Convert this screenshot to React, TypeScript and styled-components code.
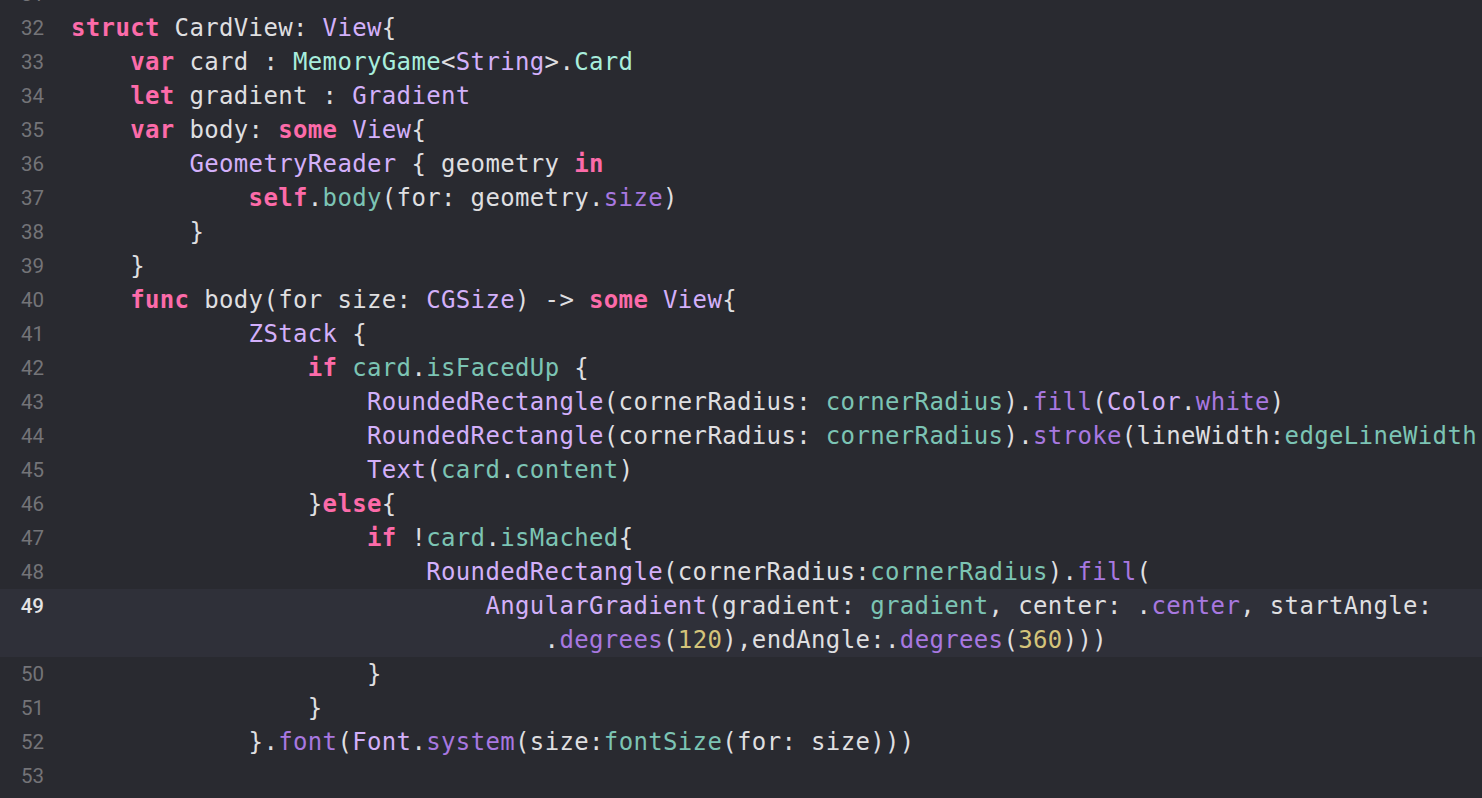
import React from "react";
import styled, { createGlobalStyle } from "styled-components";

const Global = createGlobalStyle`
  html, body { margin: 0; padding: 0; background: #292a30; overflow: hidden; }
  #root { width: 1482px; height: 798px; overflow: hidden; }
`;

const Editor = styled.div`
  width: 1482px;
  height: 798px;
  background: #292a30;
  overflow: hidden;
`;

const Lines = styled.div`
  display: flex;
  flex-direction: column;
  margin-top: -23px;
`;

const Row = styled.div<{ $current?: boolean }>`
  display: grid;
  grid-template-columns: 44px 1fr;
  column-gap: 27px;
  background: ${(p) => (p.$current ? "#2f3039" : "transparent")};
`;

const Num = styled.div<{ $current?: boolean }>`
  height: 34px;
  line-height: 34px;
  text-align: right;
  font-family: Roboto, "Noto Sans", sans-serif;
  font-size: 20.5px;
  color: ${(p) => (p.$current ? "#e4e4e6" : "#747478")};
  font-weight: ${(p) => (p.$current ? 500 : 400)};
`;

const Code = styled.div`
  display: flex;
  flex-direction: column;
  overflow: hidden;
`;

const CodeLine = styled.div<{ $indent: number }>`
  height: 34px;
  line-height: 34px;
  white-space: pre;
  font-family: "DejaVu Sans Mono", "Liberation Mono", monospace;
  font-size: 24px;
  letter-spacing: 0.35px;
  color: #dfdfe0;
  padding-left: ${(p) => p.$indent * 14.8}px;
`;

type Kind = "p" | "kw" | "ty" | "pt" | "pv" | "fn" | "num";

const colors: Record<Kind, string> = {
  p: "#dfdfe0",
  kw: "#fc6ba9",
  ty: "#d3b0fa",
  pt: "#a8eedd",
  pv: "#7cc4b4",
  fn: "#a878e0",
  num: "#d4c47a",
};

const Tok = styled.span<{ $k: Kind }>`
  color: ${(p) => colors[p.$k]};
  font-weight: ${(p) => (p.$k === "kw" ? 700 : 400)};
`;

type Seg = [Kind, string];
type LineData = { n: number; indent: number; segs: Seg[]; wrap?: Seg[]; current?: boolean };

const P = (s: string): Seg => ["p", s];
const K = (s: string): Seg => ["kw", s];
const T = (s: string): Seg => ["ty", s];
const PT = (s: string): Seg => ["pt", s];
const V = (s: string): Seg => ["pv", s];
const F = (s: string): Seg => ["fn", s];
const N = (s: string): Seg => ["num", s];

const lines: LineData[] = [
  { n: 31, indent: 0, segs: [] },
  { n: 32, indent: 0, segs: [K("struct"), P(" CardView: "), T("View"), P("{")] },
  { n: 33, indent: 4, segs: [K("var"), P(" card : "), PT("MemoryGame"), P("<"), T("String"), P(">."), PT("Card")] },
  { n: 34, indent: 4, segs: [K("let"), P(" gradient : "), T("Gradient")] },
  { n: 35, indent: 4, segs: [K("var"), P(" body: "), K("some"), P(" "), T("View"), P("{")] },
  { n: 36, indent: 8, segs: [T("GeometryReader"), P(" { geometry "), K("in")] },
  { n: 37, indent: 12, segs: [K("self"), P("."), V("body"), P("(for: geometry."), F("size"), P(")")] },
  { n: 38, indent: 8, segs: [P("}")] },
  { n: 39, indent: 4, segs: [P("}")] },
  { n: 40, indent: 4, segs: [K("func"), P(" body(for size: "), T("CGSize"), P(") -> "), K("some"), P(" "), T("View"), P("{")] },
  { n: 41, indent: 12, segs: [T("ZStack"), P(" {")] },
  { n: 42, indent: 16, segs: [K("if"), P(" "), V("card"), P("."), V("isFacedUp"), P(" {")] },
  { n: 43, indent: 20, segs: [T("RoundedRectangle"), P("(cornerRadius: "), V("cornerRadius"), P(")."), F("fill"), P("("), T("Color"), P("."), F("white"), P(")")] },
  { n: 44, indent: 20, segs: [T("RoundedRectangle"), P("(cornerRadius: "), V("cornerRadius"), P(")."), F("stroke"), P("(lineWidth:"), V("edgeLineWidth")] },
  { n: 45, indent: 20, segs: [T("Text"), P("("), V("card"), P("."), V("content"), P(")")] },
  { n: 46, indent: 16, segs: [P("}"), K("else"), P("{")] },
  { n: 47, indent: 20, segs: [K("if"), P(" !"), V("card"), P("."), V("isMached"), P("{")] },
  { n: 48, indent: 24, segs: [T("RoundedRectangle"), P("(cornerRadius:"), V("cornerRadius"), P(")."), F("fill"), P("(")] },
  {
    n: 49,
    indent: 28,
    current: true,
    segs: [T("AngularGradient"), P("(gradient: "), V("gradient"), P(", center: ."), F("center"), P(", startAngle:")],
    wrap: [P("."), F("degrees"), P("("), N("120"), P("),endAngle:."), F("degrees"), P("("), N("360"), P(")))")],
  },
  { n: 50, indent: 20, segs: [P("}")] },
  { n: 51, indent: 16, segs: [P("}")] },
  { n: 52, indent: 12, segs: [P("}."), F("font"), P("("), T("Font"), P("."), F("system"), P("(size:"), V("fontSize"), P("(for: size)))")] },
  { n: 53, indent: 0, segs: [] },
];

const renderSegs = (segs: Seg[]) =>
  segs.map(([k, s], i) => (
    <Tok key={i} $k={k}>
      {s}
    </Tok>
  ));

export default function App() {
  return (
    <Editor>
      <Global />
      <Lines>
        {lines.map((l) => (
          <Row key={l.n} $current={l.current}>
            <Num $current={l.current}>{l.n}</Num>
            <Code>
              <CodeLine $indent={l.indent}>{renderSegs(l.segs)}</CodeLine>
              {l.wrap && <CodeLine $indent={l.indent + 4}>{renderSegs(l.wrap)}</CodeLine>}
            </Code>
          </Row>
        ))}
      </Lines>
    </Editor>
  );
}
